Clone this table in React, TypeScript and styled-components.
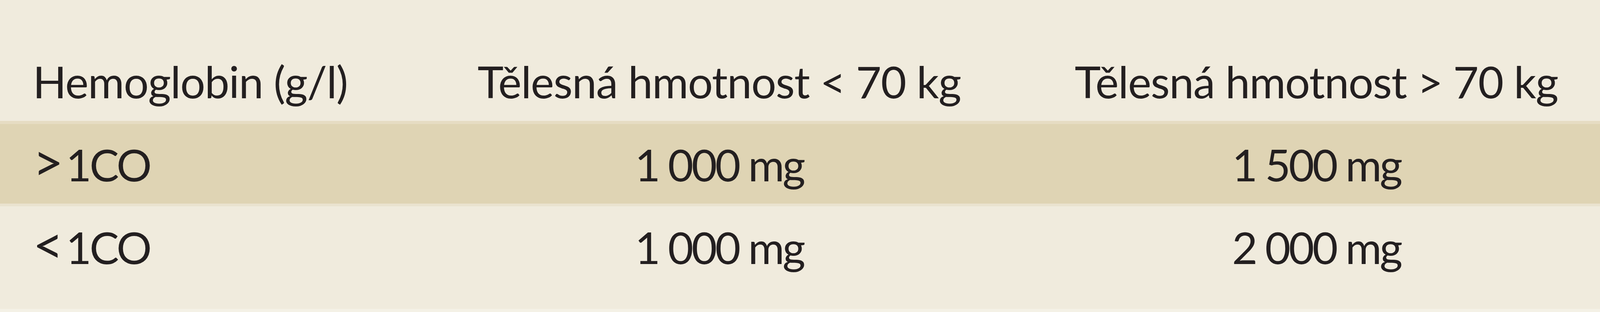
import React from "react";
import styled, { createGlobalStyle } from "styled-components";

const GlobalStyle = createGlobalStyle`
  html, body {
    margin: 0;
    padding: 0;
    background: #f0ebdd;
  }
  body {
    font-family: Lato, "Liberation Sans", sans-serif;
    color: #231f20;
    overflow: hidden;
  }
`;

const Table = styled.div`
  width: 100%;
  height: 800px;
  box-sizing: border-box;
  background: #f0ebdd;
  border-bottom: 8px solid #f4f1e6;
  display: flex;
  flex-direction: column;
`;

const Row = styled.div<{ $variant: "head" | "band" | "plain" }>`
  display: grid;
  grid-template-columns: 25.35% 39.2% 35.45%;
  box-sizing: border-box;
  font-size: 113px;
  line-height: 113px;
  ${({ $variant }) =>
    $variant === "head"
      ? `height: 310px; padding-top: 152px;`
      : $variant === "band"
      ? `height: 219px; padding-top: 47px; background: #dfd4b4;
         border-top: 8px solid #e6dcc3; border-bottom: 7px solid #eae3cf;`
      : `height: 263px; padding-top: 48px;`}
`;

const Cell = styled.div<{ $align?: "left" | "center"; $tight?: boolean }>`
  text-align: ${({ $align }) => $align ?? "center"};
  padding-left: ${({ $align }) => ($align === "left" ? "8.1%" : "0")};
  letter-spacing: ${({ $tight }) => ($tight ? "-5px" : "-1.5px")};
  white-space: nowrap;
`;

const Sym = styled.span`
  font-size: 1.2em;
  line-height: 0;
  margin-right: 11px;
`;

const rows = [
  { sym: ">", light: "1\u00a0000 mg", heavy: "1\u00a0500 mg", variant: "band" as const },
  { sym: "<", light: "1\u00a0000 mg", heavy: "2\u00a0000 mg", variant: "plain" as const },
];

export default function App() {
  return (
    <>
      <GlobalStyle />
      <Table>
        <Row $variant="head">
          <Cell $align="left">Hemoglobin (g/l)</Cell>
          <Cell>Tělesná hmotnost &lt; 70 kg</Cell>
          <Cell>Tělesná hmotnost &gt; 70 kg</Cell>
        </Row>
        {rows.map((r, i) => (
          <Row key={i} $variant={r.variant}>
            <Cell $align="left" $tight>
              <Sym>{r.sym}</Sym>1CO
            </Cell>
            <Cell $tight>{r.light}</Cell>
            <Cell $tight>{r.heavy}</Cell>
          </Row>
        ))}
      </Table>
    </>
  );
}
